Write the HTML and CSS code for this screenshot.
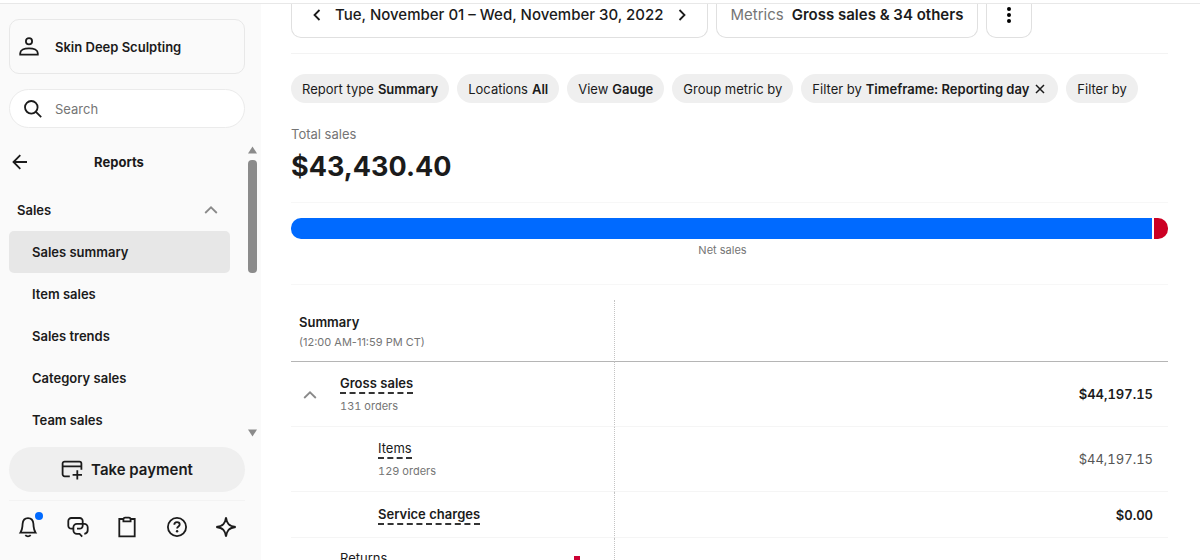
FILE: index.html
```html
<!DOCTYPE html>
<html lang="en">
<head>
<meta charset="utf-8">
<title>Sales summary</title>
<link rel="stylesheet" href="styles.css">
</head>
<body>
<div class="topline"></div>
<div class="app">
  <aside class="sidebar">
    <button class="account" type="button">
      <svg class="icon" width="22" height="22" viewBox="0 0 22 22"><circle cx="11" cy="5.2" r="3.1"/><path d="M2.200 18.600v-1.400c0-3 3.900-4.900 8.800-4.900s8.800 1.900 8.800 4.900v1.400z"/></svg>
      <span>Skin Deep Sculpting</span>
    </button>
    <label class="search">
      <svg class="icon" width="20" height="20" viewBox="0 0 20 20"><circle cx="8.300" cy="8.300" r="6.300"/><path d="M12.900 12.900l5.300 5.300"/></svg>
      <input type="search" placeholder="Search" aria-label="Search">
    </label>
    <div class="nav-area">
      <nav class="nav">
        <div class="nav-head">
          <button class="plain" type="button" aria-label="Back"><svg class="icon" width="16" height="16" viewBox="0 0 16 16"><path d="M15 8H1.800M8.300 1.200L1.500 8l6.800 6.800"/></svg></button>
          <h2>Reports</h2>
        </div>
        <button class="nav-group" type="button"><span>Sales</span><svg class="icon muted" width="14" height="8" viewBox="0 0 14 8"><path d="M1.200 7L7 1.300 12.800 7"/></svg></button>
        <a class="nav-link active" href="#">Sales summary</a>
        <a class="nav-link" href="#">Item sales</a>
        <a class="nav-link" href="#">Sales trends</a>
        <a class="nav-link" href="#">Category sales</a>
        <a class="nav-link" href="#">Team sales</a>
      </nav>
      <div class="scrollbar">
        <svg width="9" height="8" viewBox="0 0 9 8"><path d="M4.500 0.500L9 7.500H0z" fill="#8b8b8b"/></svg>
        <div class="thumb"></div>
        <svg class="down" width="9" height="8" viewBox="0 0 9 8"><path d="M0 0.500h9L4.500 7.500z" fill="#8b8b8b"/></svg>
      </div>
    </div>
    <button class="pay" type="button">
      <svg class="icon" width="22" height="20" viewBox="0 0 22 20"><path d="M8.800 16.300H3.600a2 2 0 0 1-2-2V3.600a2 2 0 0 1 2-2h14.800a2 2 0 0 1 2 2v6.200M1.600 6.300h18.800M16.300 10.200v9.200M11.600 14.800h9.400"/></svg>
      <span>Take payment</span>
    </button>
    <div class="tools">
      <button class="plain bell" type="button" aria-label="Notifications"><svg class="icon" width="22" height="22" viewBox="0 0 22 22"><path d="M3.400 16.700h15.200c-1.300-2-1.800-3.600-2-6.300l-.2-2.600C16.100 4.600 14 2.200 11 2.200S5.900 4.600 5.600 7.800l-.2 2.600c-.2 2.700-.7 4.300-2 6.300zM8.300 19.200c1.400 1.400 4 1.400 5.400 0"/></svg><span class="dot"></span></button>
      <button class="plain" type="button" aria-label="Messages"><svg class="icon" width="22" height="22" viewBox="0 0 22 22"><path d="M7 12.700H4.300a3 3 0 0 1-3-3V5a3 3 0 0 1 3-3h8.400a3 3 0 0 1 3 3v4.700a3 3 0 0 1-3 3H10"/><path d="M15.200 20.600l-2.600-2.800H9.900a3.500 3.500 0 0 1-3.500-3.500v-3a3.500 3.500 0 0 1 3.500-3.500h7.300a3.500 3.500 0 0 1 3.500 3.500v3c0 2-1.300 3.300-3.400 3.500"/></svg></button>
      <button class="plain" type="button" aria-label="Orders"><svg class="icon" width="22" height="22" viewBox="0 0 22 22"><path d="M7.600 3H3.300v17.400h15.400V3h-4.300"/><path d="M7.400 5.400V3.400c0-1 .7-1.700 1.700-1.700h3.800c1 0 1.700.7 1.700 1.700v2z"/></svg></button>
      <button class="plain" type="button" aria-label="Help"><svg class="icon" width="22" height="22" viewBox="0 0 22 22"><circle cx="11" cy="11" r="9.100"/><path d="M8.300 8.700c0-1.600 1.100-2.600 2.700-2.600s2.700 1 2.700 2.400c0 2-2.600 1.900-2.600 4"/><circle class="fill" cx="11.100" cy="15.300" r="1.200"/></svg></button>
      <button class="plain" type="button" aria-label="Assistant"><svg class="icon" width="22" height="22" viewBox="0 0 22 22"><path d="M11 1.300c.8 6 2.800 8.900 9.700 9.700-6.900.8-8.900 3.700-9.700 9.700-.8-6-2.800-8.900-9.700-9.700C8.200 10.200 10.200 7.300 11 1.300z"/></svg></button>
    </div>
  </aside>
  <main class="main">
    <div class="toolbar">
      <div class="box date">
        <button class="plain" type="button" aria-label="Previous"><svg class="icon" width="8" height="12" viewBox="0 0 8 12"><path d="M6.500 1L1.500 6l5 5"/></svg></button>
        <span>Tue, November 01 – Wed, November 30, 2022</span>
        <button class="plain" type="button" aria-label="Next"><svg class="icon" width="8" height="12" viewBox="0 0 8 12"><path d="M1.500 1l5 5-5 5"/></svg></button>
      </div>
      <button class="box metrics" type="button"><span class="grey">Metrics</span><b>Gross sales &amp; 34 others</b></button>
      <button class="box more" type="button" aria-label="More"><svg width="6" height="18" viewBox="0 0 6 18"><circle cx="3" cy="3" r="2"/><circle cx="3" cy="9" r="2"/><circle cx="3" cy="15" r="2"/></svg></button>
    </div>
    <div class="chips">
      <button class="chip" type="button">Report type <b>Summary</b></button>
      <button class="chip" type="button">Locations <b>All</b></button>
      <button class="chip" type="button">View <b>Gauge</b></button>
      <button class="chip" type="button">Group metric by</button>
      <button class="chip" type="button">Filter by <b>Timeframe: Reporting day</b><svg class="icon" width="10" height="10" viewBox="0 0 10 10"><path d="M1 1l8 8M9 1L1 9"/></svg></button>
      <button class="chip" type="button">Filter by</button>
    </div>
    <section class="total">
      <div class="total-label">Total sales</div>
      <div class="total-value">$43,430.40</div>
    </section>
    <section class="gauge">
      <div class="bar"><div class="net"></div><div class="returns"></div></div>
      <div class="gauge-label">Net sales</div>
    </section>
    <table class="report">
      <thead>
        <tr><th scope="col">Summary<small>(12:00 AM-11:59 PM CT)</small></th><td></td></tr>
      </thead>
      <tbody>
        <tr class="strong">
          <th scope="row"><div class="cell"><button class="plain toggle" type="button" aria-label="Collapse"><svg class="icon muted" width="14" height="8" viewBox="0 0 14 8"><path d="M1.200 7L7 1.300 12.800 7"/></svg></button><div><span class="term">Gross sales</span><small>131 orders</small></div></div></th>
          <td>$44,197.15</td>
        </tr>
        <tr>
          <th scope="row"><div class="cell child"><div><span class="term">Items</span><small>129 orders</small></div></div></th>
          <td>$44,197.15</td>
        </tr>
        <tr class="strong short">
          <th scope="row"><div class="cell child"><div><span class="term">Service charges</span></div></div></th>
          <td>$0.00</td>
        </tr>
        <tr class="last">
          <th scope="row"><div class="cell group"><span class="term">Returns</span><span class="flag"></span></div></th>
          <td></td>
        </tr>
      </tbody>
    </table>
  </main>
</div>
</body>
</html>
```
FILE: styles.css
```css
* { box-sizing: border-box; }
body {
  margin: 0;
  height: 100vh;
  display: flex;
  flex-direction: column;
  overflow: hidden;
  background: #fff;
  color: #1b1b1b;
  font: 13px/20px Inter, "Liberation Sans", sans-serif;
}
button, input { font: inherit; color: inherit; }
button { cursor: pointer; border: 0; background: none; padding: 0; }
b { font-weight: 600; }
.icon { fill: none; stroke: #1b1b1b; stroke-width: 1.8; flex: none; display: block; }
.icon.muted { stroke: #8a8a8a; }
.icon .fill { fill: #1b1b1b; stroke: none; }
.plain { display: flex; }
.topline { height: 4px; flex: none; border-bottom: 1px solid #e8e8e8; }
.app { flex: 1; min-height: 0; display: flex; }

.sidebar {
  width: 261px;
  flex: none;
  display: flex;
  flex-direction: column;
  background: #fafafa;
  padding: 15px 0 22px 9px;
}
.account {
  height: 55px;
  flex: none;
  margin-right: 16px;
  padding: 0 8px;
  display: flex;
  align-items: center;
  gap: 15px;
  border: 1px solid #e8e8e8;
  border-radius: 10px;
  font-weight: 600;
}
.search {
  height: 39px;
  flex: none;
  margin: 15px 16px 0 0;
  padding: 0 13px;
  display: flex;
  align-items: center;
  gap: 12px;
  background: #fff;
  border: 1px solid #ebebeb;
  border-radius: 20px;
}
.search input { border: 0; outline: 0; background: none; padding: 0; width: 100%; min-width: 0; }
.search input::placeholder { color: #757575; opacity: 1; }
.nav-area { flex: 1; min-height: 0; margin-top: 17px; display: flex; }
.nav { flex: 1; overflow: hidden; font-weight: 600; }
.nav-head { display: flex; align-items: center; height: 34px; padding-left: 3px; }
.nav-head h2 { flex: 1; margin: 0; padding-right: 20px; text-align: center; font-size: 13px; font-weight: 700; }
.nav-group {
  width: 100%;
  height: 42px;
  margin-top: 10px;
  padding: 0 12px 0 8px;
  display: flex;
  align-items: center;
  justify-content: space-between;
  font-weight: 600;
}
.nav-link {
  display: flex;
  align-items: center;
  height: 42px;
  padding-left: 23px;
  border-radius: 5px;
  color: inherit;
  text-decoration: none;
}
.nav-link.active { background: #e7e7e7; }
.scrollbar {
  width: 9px;
  margin: 0 4px 0 18px;
  padding: 1px 0 2px;
  display: flex;
  flex-direction: column;
}
.thumb { height: 113px; margin-top: 6px; border-radius: 4px; background: #8b8b8b; }
.scrollbar .down { margin-top: auto; }
.pay {
  height: 45px;
  flex: none;
  margin: 8px 16px 0 0;
  display: flex;
  align-items: center;
  justify-content: center;
  gap: 8px;
  border-radius: 23px;
  background: #efefef;
  font-size: 15px;
  font-weight: 600;
}
.tools {
  flex: none;
  margin: 8px 16px 0 0;
  padding: 15px 8px 0;
  display: flex;
  justify-content: space-between;
  border-top: 1px solid #f3f3f3;
}
.bell { position: relative; }
.dot { position: absolute; top: -4px; right: -4px; width: 8px; height: 8px; border-radius: 50%; background: #006aff; }

.main { flex: 1; min-width: 0; overflow: hidden; padding: 0 32px 0 30px; }
.toolbar { display: flex; gap: 8px; padding-bottom: 15px; border-bottom: 1px solid #f3f3f3; }
.box {
  height: 34px;
  padding: 0 14px 12px;
  display: flex;
  align-items: center;
  border: 1px solid #e0e0e0;
  border-top: 0;
  border-radius: 0 0 10px 10px;
  font-size: 15px;
}
.date { gap: 14px; padding: 0 21px 12px; font-weight: 500; }
.metrics { gap: 8px; }
.grey { color: #757575; }
.more { width: 46px; justify-content: center; }
.chips { display: flex; gap: 8px; margin-top: 20px; }
.chip {
  height: 29px;
  padding: 0 11px;
  display: flex;
  align-items: center;
  gap: 4px;
  border-radius: 15px;
  background: #efefef;
  white-space: nowrap;
}
.chip .icon { margin: 0 2px; stroke-width: 1.5; }
.total { padding: 21px 0 14px; border-bottom: 1px solid #f7f7f7; }
.total-label { color: #757575; }
.total-value { font-size: 27px; line-height: 42px; font-weight: 700; margin-top: 2px; }
.gauge { padding: 15px 0 24px; border-bottom: 1px solid #f7f7f7; }
.bar { display: flex; gap: 2px; height: 21px; border-radius: 10px; overflow: hidden; }
.net { flex: 1; background: #006aff; }
.returns { width: 14px; border-radius: 0 6px 6px 0; background: #cc0023; }
.gauge-label { margin-top: 1px; padding-right: 14px; text-align: center; font-size: 11px; color: #757575; }

.report {
  width: 100%;
  margin-top: 15px;
  border-collapse: separate;
  border-spacing: 0;
  table-layout: fixed;
  font-variant-numeric: tabular-nums;
}
.report th { width: 37%; text-align: left; font-weight: 400; padding: 0; border-right: 1px dotted #c4c4c4; vertical-align: middle; }
.report td { padding: 0 15px 0 0; text-align: right; color: #555; }
.report tr > * { height: 65px; border-bottom: 1px solid #f5f5f5; }
.report thead tr > * { height: 62px; border-bottom-color: #b5b5b5; }
.report thead th { padding: 3px 0 0 8px; font-weight: 600; }
.report small { display: block; font-size: 11px; line-height: 20px; font-weight: 400; color: #757575; }
.report thead small { font-variant-numeric: normal; }
.cell { display: flex; align-items: center; padding-top: 2px; }
.cell small { margin-top: 2px; }
.toggle { width: 49px; padding-left: 12px; }
.child { padding-left: 87px; }
.group { padding: 0 34px 0 49px; justify-content: space-between; }
.term { display: block; width: fit-content; line-height: 17px; border-bottom: 2px dashed #333; }
.strong th, .strong td { font-weight: 600; color: #1b1b1b; }
.report .short > * { height: 46px; }
.report .last > * { height: 44px; }
.flag { width: 6px; height: 8px; background: #cc0033; }
```
